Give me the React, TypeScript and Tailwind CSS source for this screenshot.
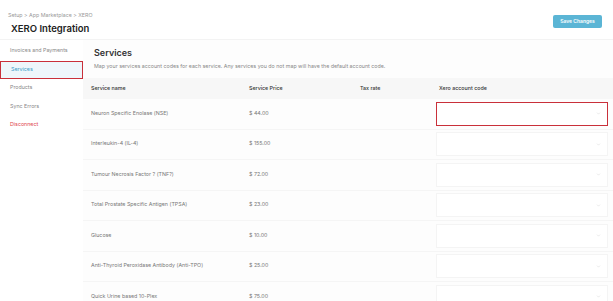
import { ChevronDown } from "lucide-react";

const services = [
  { name: "Neuron Specific Enolase (NSE)", price: "$ 44.00" },
  { name: "Interleukin-4 (IL-4)", price: "$ 155.00" },
  { name: "Tumour Necrosis Factor ? (TNF?)", price: "$ 72.00" },
  { name: "Total Prostate Specific Antigen (TPSA)", price: "$ 23.00" },
  { name: "Glucose", price: "$ 10.00" },
  { name: "Anti-Thyroid Peroxidase Antibody (Anti-TPO)", price: "$ 25.00" },
  { name: "Quick Urine based 10-Plex", price: "$ 75.00" },
];

const menu = ["Invoices and Payments", "Services", "Products", "Sync Errors", "Disconnect"];

export default function App() {
  return (
    <div className="w-[613px] h-[301px] overflow-hidden bg-white text-[#555] font-['Inter','Liberation_Sans',sans-serif]">
      {/* header */}
      <div className="h-[40px] flex items-start justify-between border-b border-[#f3f3f3]">
        <div className="pl-[8px] pt-[11px]">
          <div className="text-[5.3px] leading-[8px] text-[#999]">Setup &gt; App Marketplace &gt; XERO</div>
          <h1 className="pl-[3px] mt-[4px] text-[9.5px] leading-[12px] font-semibold text-[#222]">XERO Integration</h1>
        </div>
        <button className="mt-[15px] mr-[11px] w-[49px] h-[13px] rounded-[2px] bg-[#5bb5d5] text-white text-[5px] font-semibold">
          Save Changes
        </button>
      </div>

      <div className="flex">
        {/* sidebar */}
        <div className="w-[83px] shrink-0 pt-[2px]">
          {menu.map((m) => (
            <div
              key={m}
              className={`h-[18.5px] flex items-center pl-[10px] text-[5.3px] ${
                m === "Services"
                  ? "bg-[#eef6fb] text-[#3a9bc7] border-[1.5px] border-[#c9303a] pl-[8.5px]"
                  : m === "Disconnect"
                  ? "text-[#e0454c]"
                  : "text-[#888]"
              }`}
            >
              {m}
            </div>
          ))}
        </div>

        {/* content */}
        <div className="flex-1 bg-[#fdfdfd]">
          <h2 className="pl-[11px] pt-[7px] text-[9px] leading-[12px] font-semibold text-[#333]">Services</h2>
          <p className="pl-[11px] mt-[3px] text-[5.3px] leading-[8px] text-[#888]">
            Map your services account codes for each service. Any services you do not map will have the default account code.
          </p>
          <div className="mt-[8px]">
            <div className="h-[21px] flex items-center bg-[#f7f7f7] text-[5.3px] font-medium text-[#333]">
              <div className="w-[158px] pl-[8px]">Service name</div>
              <div className="w-[111px] pl-[8px]">Service Price</div>
              <div className="w-[79px] pl-[8px]">Tax rate</div>
              <div className="flex-1 pl-[8px]">Xero account code</div>
            </div>
            {services.map((s, i) => (
              <div key={s.name} className="h-[30.5px] flex items-center border-b border-[#f5f5f5] text-[5.3px] text-[#777]">
                <div className="w-[158px] pl-[8px]">{s.name}</div>
                <div className="w-[111px] pl-[8px]">{s.price}</div>
                <div className="w-[79px] pl-[8px]"></div>
                <div className="flex-1 pl-[5px] pr-[5px]">
                  <div
                    className={`h-[24px] flex items-center justify-end pr-[6px] bg-white ${
                      i === 0 ? "border-[1.5px] border-[#c9303a]" : "border border-[#f4f4f4]"
                    }`}
                  >
                    <ChevronDown className="w-[5px] h-[5px] text-[#ccc]" strokeWidth={2} />
                  </div>
                </div>
              </div>
            ))}
          </div>
        </div>
      </div>
    </div>
  );
}
